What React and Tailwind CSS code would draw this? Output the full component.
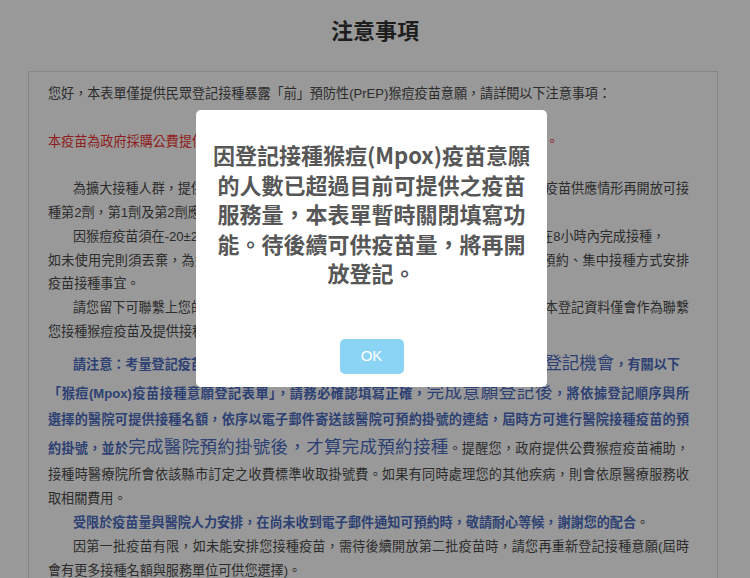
import clsx from 'clsx';

const blue = 'font-bold text-[#4b6cc1]';
const big = 'text-[17.5px] text-[#4b6cc1]';

// one printed line of the notice; full lines are stretched to the right edge
function Line({ full, indent, className, children }) {
  return (
    <span
      className={clsx(
        'block',
        full && 'text-justify [text-align-last:justify]',
        indent && 'indent-[25px]',
        className
      )}
    >
      {children}
    </span>
  );
}

function Notice() {
  return (
    <div className="mt-[27px] ml-[28px] w-[690px] border border-[#e0e0e0] pl-[19px] pr-[28px] pt-[10px] pb-8 text-[13.1px] leading-[23.7px] text-[#4a4a4a] font-['Liberation_Sans','Noto_Sans_CJK_TC',sans-serif]">
      <p>您好，本表單僅提供民眾登記接種暴露「前」預防性(PrEP)猴痘疫苗意願，請詳閱以下注意事項：</p>

      <p className="mt-[24px] text-[#ee3333]">
        本疫苗為政府採購公費提供，僅限符合接種條件之民眾登記接種，不開放民眾自費接種。
      </p>

      <div className="mt-[24px]">
        <p>
          <Line full indent>為擴大接種人群，提供更多民眾接種機會，自即日起開放第一劑接種登記，後續視疫苗供應情形再開放可接</Line>
          <Line>種第2劑，第1劑及第2劑應間隔四週以上。</Line>
        </p>
        <p>
          <Line indent>因猴痘疫苗須在-20±2°C冷凍保存，解凍後於冷藏可保存至三十天，開瓶抽取後需在8小時內完成接種，</Line>
          <Line full>如未使用完則須丟棄，為避免疫苗浪費，本次疫苗接種將由縣市合作醫療院所以事先預約、集中接種方式安排</Line>
          <Line>疫苗接種事宜。</Line>
        </p>
        <p>
          <Line full indent>請您留下可聯繫上您的姓名、電子郵件及手機號碼等聯絡資料以便後續通知使用，本登記資料僅會作為聯繫</Line>
          <Line>您接種猴痘疫苗及提供接種服務使用，不會作為其他用途。</Line>
        </p>
        <p className="mt-[5px]">
          <Line indent className="leading-[30px]">
            <span className={blue}>請注意：考量登記疫苗人數眾多，為使有限疫苗資源公平分配，重複登記者將喪失</span>
            <span className={big}>登記機會</span>
            <span className={blue}>，有關以下</span>
          </Line>
          <Line full className="leading-[25px]">
            <span className={blue}>「猴痘(Mpox)疫苗接種意願登記表單」，請務必確認填寫正確，</span>
            <span className={big}>完成意願登記後</span>
            <span className={blue}>，將依據登記順序與所</span>
          </Line>
          <Line full className="leading-[27px]">
            <span className={blue}>選擇的醫院可提供接種名額，依序以電子郵件寄送該醫院可預約掛號的連結，屆時方可進行醫院接種疫苗的預</span>
          </Line>
          <Line full className="leading-[28px]">
            <span className={blue}>約掛號，並於</span>
            <span className={big}>完成醫院預約掛號後，才算完成預約接種</span>
            。提醒您，政府提供公費猴痘疫苗補助，
          </Line>
          <Line full className="leading-[24px]">接種時醫療院所會依該縣市訂定之收費標準收取掛號費。如果有同時處理您的其他疾病，則會依原醫療服務收</Line>
          <Line className="leading-[24px]">取相關費用。</Line>
        </p>
        <p className="leading-[24px]">
          <Line indent>
            <span className={blue}>受限於疫苗量與醫院人力安排，在尚未收到電子郵件通知可預約時，敬請耐心等候，謝謝您的配合</span>。
          </Line>
        </p>
        <p className="leading-[24px]">
          <Line full indent>因第一批疫苗有限，如未能安排您接種疫苗，需待後續開放第二批疫苗時，請您再重新登記接種意願(屆時</Line>
          <Line>會有更多接種名額與服務單位可供您選擇)。</Line>
        </p>
      </div>
    </div>
  );
}

function ClosedDialog() {
  return (
    <>
      <div className="fixed inset-0 bg-black/40" />
      <div className="fixed left-[196px] top-[110px] w-[351px] rounded-[5px] bg-white font-['Noto_Sans_CJK_TC',sans-serif]">
        <p className="pt-[30px] text-center text-[22px] leading-[29.5px] font-semibold text-[#575757]">
          因登記接種猴痘(Mpox)疫苗意願
          <br />
          的人數已超過目前可提供之疫苗
          <br />
          服務量，本表單暫時關閉填寫功
          <br />
          能。待後續可供疫苗量，將再開
          <br />
          放登記。
        </p>
        <div className="mt-[51px] pb-[13px] flex justify-center">
          <button className="w-[64px] h-[35px] rounded-[5px] bg-[#8cd4f5] text-white text-[15px] font-['Liberation_Sans',sans-serif]">
            OK
          </button>
        </div>
      </div>
    </>
  );
}

export default function App() {
  return (
    <div className="h-screen overflow-hidden bg-white">
      <h1 className="pt-[14px] text-center text-[22px] leading-[30px] font-bold text-[#333] font-['Noto_Sans_CJK_TC',sans-serif]">
        注意事項
      </h1>
      <Notice />
      <ClosedDialog />
    </div>
  );
}
